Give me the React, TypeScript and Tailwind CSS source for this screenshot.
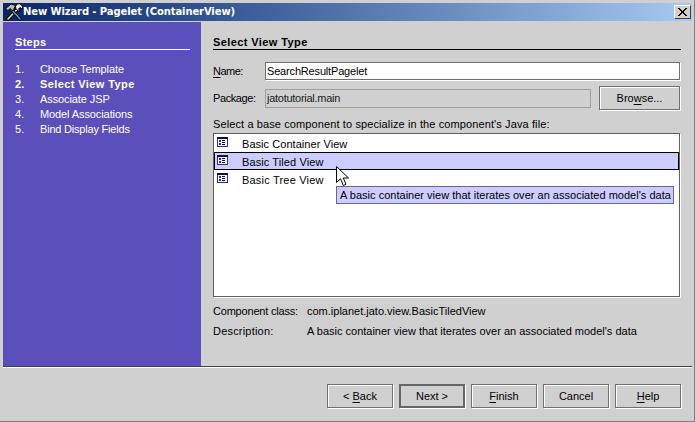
const steps = [
  { label: "Choose Template", track: "tracking-[-0.1px]" },
  { label: "Select View Type", track: "tracking-[0.4px]" },
  { label: "Associate JSP", track: "tracking-[-0.1px]" },
  { label: "Model Associations", track: "tracking-[-0.1px]" },
  { label: "Bind Display Fields", track: "tracking-[-0.2px]" },
];
const views = [
  { label: "Basic Container View", track: "tracking-[0.05px]" },
  { label: "Basic Tiled View", track: "tracking-[0.1px]" },
  { label: "Basic Tree View", track: "tracking-[0.2px]" },
];

function ViewIcon() {
  return (
    <svg width="11" height="11" viewBox="0 0 11 11" className="mt-[2px] ml-[2px] shrink-0" shapeRendering="crispEdges">
      <rect x="0" y="0" width="11" height="10" fill="#3030a8" />
      <rect x="0" y="0" width="11" height="2" fill="#101040" />
      <rect x="1" y="2" width="9" height="7" fill="#f0f0ff" />
      <rect x="2" y="3" width="2" height="2" fill="#303090" />
      <rect x="5" y="3" width="3" height="1" fill="#101040" />
      <rect x="5" y="5" width="3" height="1" fill="#101040" />
      <rect x="2" y="6" width="2" height="2" fill="#303090" />
      <rect x="5" y="7" width="3" height="1" fill="#101040" />
    </svg>
  );
}

function ToolsIcon() {
  return (
    <svg width="18" height="18" viewBox="0 0 18 18" className="ml-[2px] shrink-0">
      <path d="M3 16 L13 5.500" stroke="#000" strokeWidth="3.4" strokeLinecap="round" />
      <path d="M3 16 L13 5.500" stroke="#f0e8a0" strokeWidth="1.600" strokeLinecap="round" />
      <path d="M12 1 A4.200 4.200 0 0 1 17.500 6 L15 4.500 L13.500 6 L15 8 A4.200 4.200 0 0 1 10.500 3.500 Z" fill="#e8e8e8" stroke="#000" strokeWidth="0.9" />
      <path d="M15 16 L6 6" stroke="#000" strokeWidth="3.200" strokeLinecap="round" />
      <path d="M15 16 L6 6" stroke="#48a0d0" strokeWidth="1.500" strokeLinecap="round" />
      <path d="M0.800 5.500 L6 1 L10.500 2.500 L8 8 L5 5.500 L2.800 8 Z" fill="#b8b8b8" stroke="#000" strokeWidth="0.9" />
    </svg>
  );
}

function WizardButton({ children, primary }: { children: React.ReactNode; primary?: boolean }) {
  return (
    <button
      className={
        primary
          ? "w-[66px] h-[24px] border-2 border-[#666666] shadow-[1px_1px_0_#ffffff] text-black"
          : "w-[66px] h-[24px] border border-[#707070] shadow-[1px_1px_0_#ffffff,inset_1px_1px_0_#ffffff] text-black"
      }
    >
      {children}
    </button>
  );
}

export default function App() {
  return (
    <div
      className="w-[695px] h-[422px] overflow-hidden flex flex-col bg-[#d0d0d0] pt-[3px] pl-[3px] pr-[2px] border-r border-b border-[#808080] text-[11px] leading-[14px] text-black"
      style={{ fontFamily: '"Liberation Sans", Arial, sans-serif' }}
    >
      <div className="h-[18px] mb-px flex items-center justify-between bg-gradient-to-r from-[#0a246a] to-[#a6caf0]">
        <div className="flex items-center">
          <ToolsIcon />
          <span className="text-white font-bold text-[10px] tracking-[-0.1px] whitespace-nowrap" style={{ fontFamily: '"DejaVu Sans", Verdana, sans-serif' }}>
            New Wizard - Pagelet (ContainerView)
          </span>
        </div>
        <button className="w-[17px] h-[14px] mr-px flex items-center justify-center bg-[#d4d0c8] border border-t-white border-l-white border-r-[#404040] border-b-[#404040]">
          <svg width="9" height="8" viewBox="0 0 9 8" shapeRendering="crispEdges">
            <path d="M0 0h2l2.500 3 2.500-3h2l-3.500 4 3.500 4h-2l-2.500-3-2.500 3h-2l3.500-4z" fill="#000" />
          </svg>
        </button>
      </div>

      <div className="h-[344px] flex">
        <aside className="w-[198px] bg-[#5a4fbb] text-white pt-[13px] pl-[12px] pr-[11px]">
          <h2 className="font-bold h-[15px] border-b border-white tracking-[0.3px]">Steps</h2>
          <ol className="mt-[11px]">
            {steps.map((step, i) => (
              <li key={step.label} className={i === 1 ? "flex h-[15px] items-center font-bold" : "flex h-[15px] items-center"}>
                <span className="w-[25px]">{i + 1}.</span>
                <span className={"whitespace-nowrap " + step.track}>{step.label}</span>
              </li>
            ))}
          </ol>
        </aside>

        <main className="flex-1 pt-[13px] pl-[12px] pr-[11px]">
          <h2 className="font-bold h-[15px] border-b border-black tracking-[0.4px]">Select View Type</h2>

          <div className="mt-[12px] flex items-center h-[18px]">
            <label className="w-[52px] tracking-[-0.5px]"><u className="underline-offset-2">N</u>ame:</label>
            <div className="flex-1 h-[18px] mr-px bg-white border border-[#707070] shadow-[1px_1px_0_#ffffff] pl-[1px] tracking-[-0.17px] leading-[16px]">SearchResultPagelet</div>
          </div>

          <div className="mt-[6px] flex items-center h-[24px]">
            <label className="w-[52px] tracking-[-0.4px]">Package:</label>
            <div className="w-[326px] h-[19px] border border-[#a0a0a0] pl-[1px] text-[#202020] tracking-[-0.27px] leading-[17px]">jatotutorial.main</div>
            <div className="flex-1" />
            <div className="w-[81px] h-[24px] mr-px flex items-center justify-center border border-[#707070] shadow-[1px_1px_0_#ffffff,inset_1px_1px_0_#ffffff]">
              Bro<u className="underline-offset-2">w</u>se...
            </div>
          </div>

          <p className="mt-[7px] tracking-[0.11px] whitespace-nowrap">Select a base component to specialize in the component's Java file:</p>

          <div className="relative mt-[2px] h-[164px] mr-px bg-white border border-[#606060] shadow-[1px_1px_0_#ffffff]">
            {views.map((view, i) => (
              <div key={view.label} className={i === 1 ? "h-[18px] flex bg-[#ccccff] border border-black" : "h-[18px] flex border border-transparent"}>
                <ViewIcon />
                <span className={"ml-[14px] mt-[2px] whitespace-nowrap " + view.track}>{view.label}</span>
              </div>
            ))}
            <div className="absolute left-[122px] top-[52px] w-[338px] h-[18px] bg-[#ccccff] border border-[#666699] pl-[3px] tracking-[0.015px] leading-[16px] whitespace-nowrap">
              A basic container view that iterates over an associated model's data
            </div>
            <svg width="13" height="21" viewBox="0 0 13 21" className="absolute left-[122px] top-[32px]">
              <path d="M0.500 0.500 V16.500 L4.500 12.800 L7.300 19.500 L10 18.300 L7.300 12 H12.500 Z" fill="#ffffff" stroke="#000000" strokeWidth="1" />
            </svg>
          </div>

          <div className="mt-[7px] flex h-[14px]">
            <span className="w-[94px] tracking-[-0.2px]">Component class:</span>
            <span className="whitespace-nowrap">com.iplanet.jato.view.BasicTiledView</span>
          </div>
          <div className="mt-[6px] flex h-[14px]">
            <span className="w-[94px] tracking-[0.2px]">Description:</span>
            <span className="whitespace-nowrap">A basic container view that iterates over an associated model's data</span>
          </div>
        </main>
      </div>

      <footer className="flex-1 border-t border-[#404040] shadow-[inset_0_1px_0_#ffffff] pt-[17px] pr-[11px] flex justify-end gap-[6px]">
        <WizardButton>&lt; <u className="underline-offset-2">B</u>ack</WizardButton>
        <WizardButton primary>Next &gt;</WizardButton>
        <WizardButton><u className="underline-offset-2">F</u>inish</WizardButton>
        <WizardButton>Cancel</WizardButton>
        <WizardButton><u className="underline-offset-2">H</u>elp</WizardButton>
      </footer>
    </div>
  );
}
